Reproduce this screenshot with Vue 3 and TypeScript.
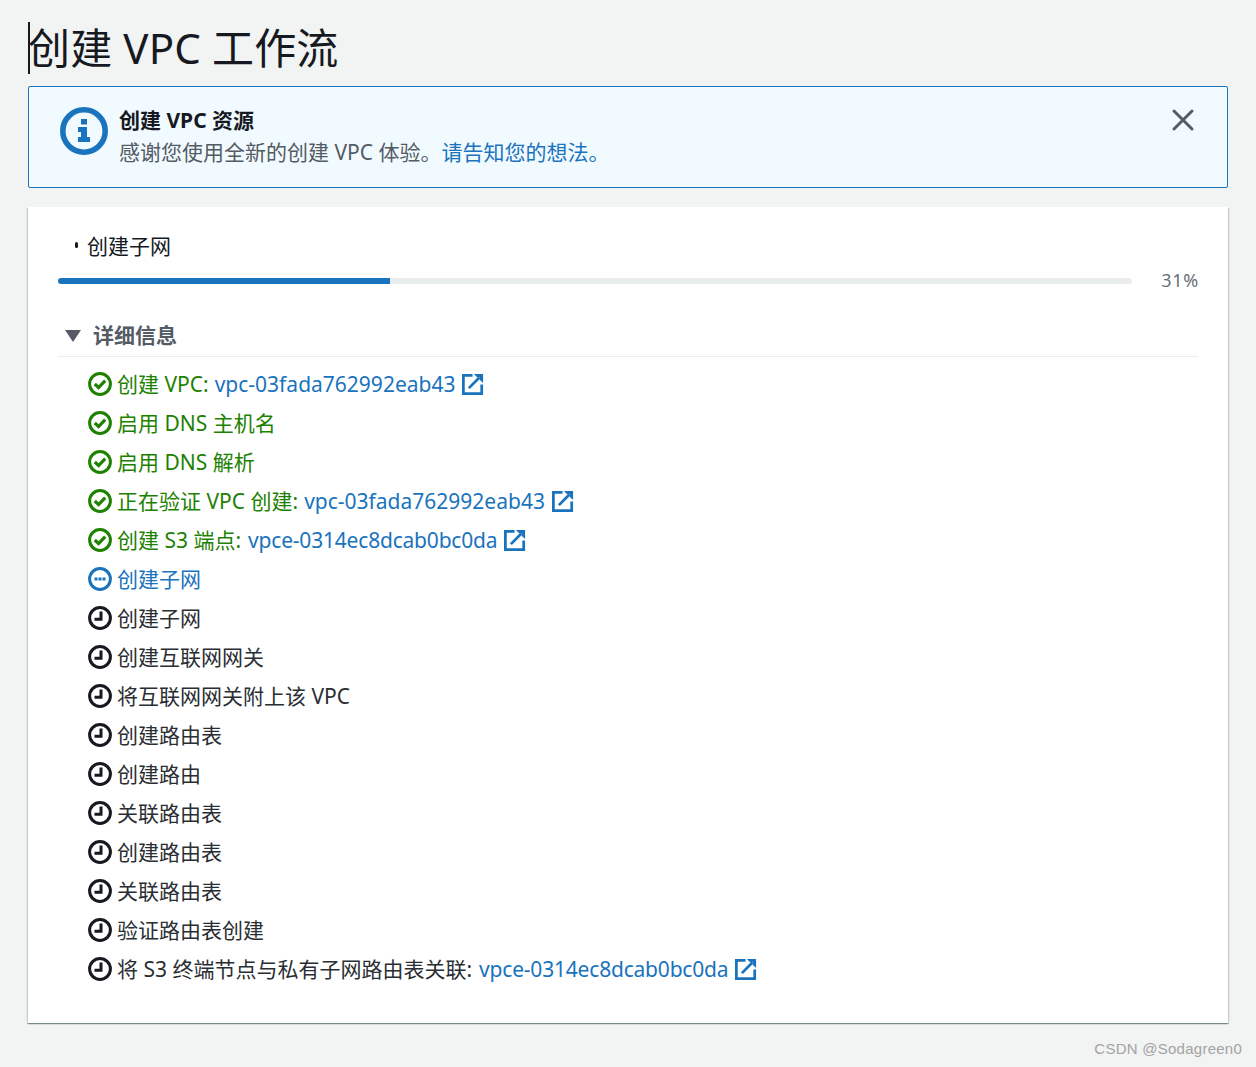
<script setup lang="ts">
type Step = { state: 'done' | 'active' | 'wait'; label: string; link?: string };
const steps: Step[] = [
  { state: 'done', label: '创建 VPC:', link: 'vpc-03fada762992eab43' },
  { state: 'done', label: '启用 DNS 主机名' },
  { state: 'done', label: '启用 DNS 解析' },
  { state: 'done', label: '正在验证 VPC 创建:', link: 'vpc-03fada762992eab43' },
  { state: 'done', label: '创建 S3 端点:', link: 'vpce-0314ec8dcab0bc0da' },
  { state: 'active', label: '创建子网' },
  { state: 'wait', label: '创建子网' },
  { state: 'wait', label: '创建互联网网关' },
  { state: 'wait', label: '将互联网网关附上该 VPC' },
  { state: 'wait', label: '创建路由表' },
  { state: 'wait', label: '创建路由' },
  { state: 'wait', label: '关联路由表' },
  { state: 'wait', label: '创建路由表' },
  { state: 'wait', label: '关联路由表' },
  { state: 'wait', label: '验证路由表创建' },
  { state: 'wait', label: '将 S3 终端节点与私有子网路由表关联:', link: 'vpce-0314ec8dcab0bc0da' },
];
</script>

<template>
  <div class="page">
    <h1 class="title"><span class="caret"></span>创建 VPC 工作流</h1>

    <div class="alert">
      <svg class="alert-icon" width="48" height="48" viewBox="0 0 48 48">
        <circle cx="24" cy="24" r="21.2" fill="none" stroke="#1a73bd" stroke-width="5.6" />
        <rect x="21" y="12" width="6" height="5.5" fill="#1a73bd" />
        <path d="M18 20h9v10h3v5H18v-5h3v-5h-3z" fill="#1a73bd" />
      </svg>
      <div class="alert-body">
        <div class="alert-title">创建 VPC 资源</div>
        <div class="alert-text">感谢您使用全新的创建 VPC 体验。<a class="link">请告知您的想法。</a></div>
      </div>
      <svg class="close" width="24" height="24" viewBox="0 0 24 24">
        <path d="M3 3l18 18M21 3L3 21" stroke="#545b64" stroke-width="3" stroke-linecap="round" fill="none" />
      </svg>
    </div>

    <div class="card">
      <div class="current"><span class="dot"></span>创建子网</div>
      <div class="progress-row">
        <div class="track"><div class="fill" :style="{ width: '30.9%' }"></div></div>
        <span class="percent">31%</span>
      </div>

      <div class="details-head">
        <svg class="caret-down" width="16" height="12" viewBox="0 0 16 12"><path d="M0 0h16L8 12z" fill="#545b64" /></svg>
        <span>详细信息</span>
      </div>

      <ul class="steps">
        <li v-for="(s, i) in steps" :key="i" class="step" :class="s.state">
          <svg class="status" width="24" height="24" viewBox="0 0 24 24">
            <circle cx="12" cy="12" r="10.4" fill="none" stroke="currentColor" stroke-width="3" />
            <path v-if="s.state === 'done'" d="M6.8 12l3.8 3.6L17.2 8.6" fill="none" stroke="currentColor" stroke-width="3.2" />
            <path v-else-if="s.state === 'wait'" d="M13 5.5v7.7H6.5" fill="none" stroke="currentColor" stroke-width="3" />
            <path v-else d="M6.5 10.5h3v3h-3zM10.5 10.5h3v3h-3zM14.5 10.5h3v3h-3z" fill="currentColor" />
          </svg>
          <span class="label">{{ s.label }}</span>
          <template v-if="s.link">
            <a class="link step-link" :class="{ tight: s.link.startsWith('vpce') }">{{ s.link }}</a>
            <svg class="ext" width="22" height="22" viewBox="0 0 24 24">
              <path d="M11.5 2.5H1.5v20h20V12.5" fill="none" stroke="#1a73bd" stroke-width="3" />
              <path d="M7.5 16.5L19 5" fill="none" stroke="#1a73bd" stroke-width="3" />
              <path d="M13 1h10v10l-3.5-3.5V4.5h-3z" fill="#1a73bd" />
            </svg>
          </template>
        </li>
      </ul>
    </div>

    <div class="mark">CSDN @Sodagreen0</div>
  </div>
</template>

<style>
html, body { margin: 0; background: #f2f3f3; }
</style>

<style scoped>
.page {
  box-sizing: border-box;
  height: 1067px;
  padding: 22px 28px 0;
  background: #f2f3f3;
  color: #16191f;
  font-family: "Noto Sans", "Noto Sans CJK SC", sans-serif;
  overflow: hidden;
}
.title {
  display: flex;
  align-items: center;
  height: 52px;
  margin: 0 0 12px;
  font-size: 42px;
  font-weight: 400;
  line-height: 50px;
  letter-spacing: .15px;
  white-space: pre;
}
.caret { width: 2px; height: 52px; margin-right: -2px; background: #16191f; flex: none; }
.alert {
  box-sizing: border-box;
  display: flex;
  height: 102px;
  padding: 20px 32px 0 31px;
  background: #f1faff;
  border: 1px solid #1a73bd;
  border-radius: 2px;
}
.alert-icon { flex: none; }
.alert-body { flex: 1; margin-left: 11px; margin-top: -3px; }
.alert-title { font-size: 21px; font-weight: 700; line-height: 32px; color: #16191f; }
.alert-text { font-size: 21px; line-height: 32px; color: #545b64; }
.close { flex: none; margin-top: 1px; }
.link { color: #1a73bd; }
.card {
  box-sizing: border-box;
  height: 816px;
  margin-top: 19px;
  padding: 22px 30px 0;
  background: #fff;
  box-shadow: 0 1px 1px 0 rgba(0, 28, 36, .3), 1px 1px 1px 0 rgba(0, 28, 36, .15), -1px 1px 1px 0 rgba(0, 28, 36, .15);
}
.current {
  display: flex;
  align-items: center;
  height: 32px;
  font-size: 21px;
  color: #16191f;
}
.dot { width: 3px; height: 6px; margin: 0 9px 0 17px; background: #16191f; border-radius: 2px; }
.progress-row {
  display: flex;
  align-items: center;
  margin-top: 10px;
  height: 24px;
}
.track { flex: 1; height: 6px; background: #eaeded; border-radius: 3px; overflow: hidden; margin-top: -4px; }
.fill { height: 100%; background: #1a73bd; }
.percent { width: 67px; margin-right: -1px; padding-bottom: 6px; text-align: right; font-size: 18px; letter-spacing: .7px; color: #687078; }
.details-head {
  display: flex;
  align-items: center;
  gap: 12px;
  height: 44px;
  margin-top: 17px;
  padding-left: 7px;
  border-bottom: 1px solid #eaeded;
  font-size: 21px;
  font-weight: 700;
  color: #545b64;
}
.caret-down { margin-top: 4px; }
.steps { list-style: none; margin: 7px 0 0; padding: 0 0 0 30px; }
.step {
  display: flex;
  align-items: center;
  height: 39px;
  font-size: 21px;
  white-space: pre;
}
.status { flex: none; margin-right: 5px; }
.label { padding-bottom: 2px; }
.step.done { color: #1d8102; }
.step.active { color: #1a73bd; }
.step.wait { color: #16191f; }
.step.wait .label { color: #2a2e33; }
.step-link { margin-left: 6px; }
.step-link.tight { letter-spacing: -.2px; margin-left: 7px; }
.ext { flex: none; margin-left: 7px; }
.mark {
  margin-top: 17px;
  text-align: right;
  margin-right: -14px;
  font-family: "Liberation Sans", sans-serif;
  font-size: 15px;
  letter-spacing: .25px;
  color: #a3a3a3;
}
</style>
